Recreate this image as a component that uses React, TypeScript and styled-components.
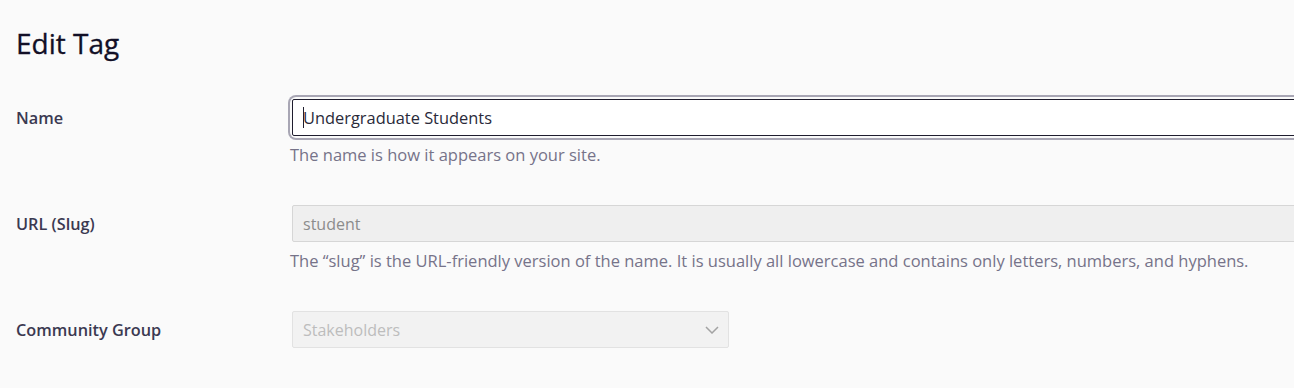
import React from "react";
import styled, { createGlobalStyle } from "styled-components";

const Global = createGlobalStyle`
  html, body { margin: 0; padding: 0; background: #fafafa; overflow: hidden; }
  body { font-family: "Open Sans", "Noto Sans", sans-serif; }
`;

const Page = styled.div`
  padding: 27px 0 0 16px;
  width: 1400px;
`;

const Title = styled.h1`
  margin: 0 0 40px 0;
  font-size: 28px;
  line-height: 32px;
  font-weight: 500;
  color: #120f26;
  -webkit-text-stroke: 0.3px #120f26;
`;

const Form = styled.div`
  display: grid;
  grid-template-columns: 276px 1010px;
  row-gap: 39px;
`;

const Label = styled.label`
  height: 37px;
  display: flex;
  align-items: center;
  font-size: 16.3px;
  font-weight: 600;
  color: #3b3951;
`;

const Field = styled.div`
  display: flex;
  flex-direction: column;
  align-items: flex-start;
`;

const InputWrap = styled.div<{ $focused?: boolean }>`
  position: relative;
  width: 100%;
  border-radius: 4px;
  box-shadow: ${(p) => (p.$focused ? "0 0 0 2px #fafafa, 0 0 0 4px #a8a6b4" : "none")};
`;

const TextInput = styled.input<{ $variant: "active" | "disabled" }>`
  box-sizing: border-box;
  width: 100%;
  height: 37px;
  padding: 0 10px;
  font-family: inherit;
  font-size: ${(p) => (p.$variant === "active" ? "16.4px" : "16px")};
  border-radius: 2px;
  outline: none;
  border: 1px solid ${(p) => (p.$variant === "active" ? "#1f1d2e" : "#d6d6d6")};
  background: ${(p) => (p.$variant === "active" ? "#ffffff" : "#efefef")};
  color: ${(p) => (p.$variant === "active" ? "#2a2a3a" : "#8c8c8c")};
`;

const Caret = styled.span`
  position: absolute;
  left: 11px;
  top: 8px;
  width: 1px;
  height: 21px;
  background: #1f1d2e;
`;

const Help = styled.p`
  margin: 8px 0 0 -2px;
  font-size: 16.5px;
  line-height: 22px;
  color: #767389;
  white-space: nowrap;
`;

const SelectWrap = styled.div`
  position: relative;
  width: 437px;
`;

const Select = styled.select`
  appearance: none;
  box-sizing: border-box;
  width: 100%;
  height: 37px;
  padding: 0 30px 0 10px;
  font-family: inherit;
  font-size: 16px;
  color: #bdbdbd;
  background: #f2f2f2;
  border: 1px solid #e2e2e2;
  border-radius: 2px;
  opacity: 1;
`;

const Chevron = styled.svg`
  position: absolute;
  right: 10px;
  top: 15px;
  pointer-events: none;
`;

export default function App() {
  return (
    <>
      <Global />
      <Page>
        <Title>Edit Tag</Title>
        <Form>
          <Label htmlFor="name">Name</Label>
          <Field>
            <InputWrap $focused>
              <TextInput id="name" $variant="active" defaultValue="Undergraduate Students" readOnly />
              <Caret />
            </InputWrap>
            <Help>The name is how it appears on your site.</Help>
          </Field>

          <Label htmlFor="slug">URL (Slug)</Label>
          <Field>
            <InputWrap>
              <TextInput id="slug" $variant="disabled" defaultValue="student" disabled />
            </InputWrap>
            <Help>
              The “slug” is the URL-friendly version of the name. It is usually all lowercase and contains only letters, numbers, and hyphens.
            </Help>
          </Field>

          <Label htmlFor="group">Community Group</Label>
          <Field>
            <SelectWrap>
              <Select id="group" disabled defaultValue="stakeholders">
                <option value="stakeholders">Stakeholders</option>
              </Select>
              <Chevron width="14" height="8" viewBox="0 0 14 8">
                <path d="M1 1 L7 7 L13 1" fill="none" stroke="#a3a3a3" strokeWidth="1.5" />
              </Chevron>
            </SelectWrap>
          </Field>
        </Form>
      </Page>
    </>
  );
}
